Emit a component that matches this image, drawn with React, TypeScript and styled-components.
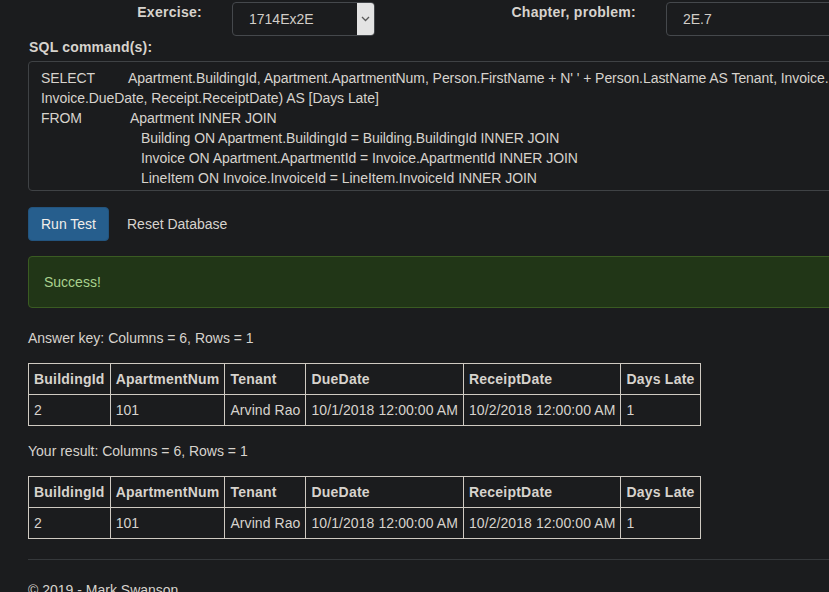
import React from "react";
import styled, { createGlobalStyle } from "styled-components";

const Global = createGlobalStyle`
  html, body {
    margin: 0;
    padding: 0;
    background: #1b1c1e;
    overflow: hidden;
  }
  body {
    font-family: "Liberation Sans", Arial, Helvetica, sans-serif;
    font-size: 14px;
    line-height: 20px;
    color: #d7d3cd;
  }
`;

const Page = styled.div`
  width: 1100px;
  padding: 2px 0 0 28px;
  box-sizing: border-box;
`;

const TopRow = styled.div`
  display: flex;
  align-items: flex-start;
`;

const FieldLabel = styled.label<{ $w: number }>`
  width: ${(p) => p.$w}px;
  text-align: right;
  font-weight: bold;
  letter-spacing: 0.28px;
  line-height: 20px;
  margin-right: 30px;
  flex: none;
`;

const SelectBox = styled.div`
  width: 143px;
  height: 34px;
  box-sizing: border-box;
  border: 1px solid #45484c;
  border-radius: 4px;
  display: flex;
  overflow: hidden;
  flex: none;
`;

const SelectValue = styled.div`
  flex: 1;
  padding: 6px 0 6px 16px;
  color: #d2cec8;
`;

const SelectArrow = styled.div`
  width: 17px;
  background: #e3e3e3;
  display: flex;
  align-items: center;
  justify-content: center;
`;

const TextInput = styled.div`
  width: 300px;
  height: 34px;
  box-sizing: border-box;
  border: 1px solid #45484c;
  border-radius: 4px;
  padding: 6px 16px;
  color: #d2cec8;
  flex: none;
`;

const SqlLabel = styled.div`
  font-weight: bold;
  letter-spacing: 0.2px;
  margin: 1px 0 4px 1px;
`;

const CodeArea = styled.div`
  height: 130px;
  box-sizing: border-box;
  border: 1px solid #3f4245;
  border-radius: 4px;
  padding: 6px 12px;
  white-space: pre;
  overflow: hidden;
  letter-spacing: -0.06px;
  color: #d7d3cd;
`;

const CodeLine = styled.div<{ $indent?: number }>`
  padding-left: ${(p) => p.$indent ?? 0}px;
  height: 20px;
`;

const Keyword = styled.span<{ $w: number }>`
  display: inline-block;
  width: ${(p) => p.$w}px;
`;

const ButtonRow = styled.div`
  display: flex;
  gap: 5px;
  margin-top: 16px;
`;

const Button = styled.button<{ $primary?: boolean }>`
  font-family: inherit;
  font-size: 14px;
  line-height: 20px;
  height: 34px;
  padding: 6px 12px;
  border-radius: 4px;
  border: 1px solid ${(p) => (p.$primary ? "#23547e" : "transparent")};
  background: ${(p) => (p.$primary ? "#265e8d" : "transparent")};
  color: ${(p) => (p.$primary ? "#f0eeea" : "#d7d3cd")};
  cursor: pointer;
`;

const Alert = styled.div`
  margin-top: 15px;
  margin-bottom: 20px;
  height: 52px;
  box-sizing: border-box;
  padding: 15px;
  background: #213617;
  border: 1px solid #3a5b22;
  border-radius: 4px;
  color: #a9d18e;
`;

const Caption = styled.p`
  margin: 0 0 15px;
`;

const Table = styled.table<{ $last?: boolean }>`
  border-collapse: collapse;
  margin-bottom: ${(p) => (p.$last ? 0 : 15)}px;
  & th,
  & td {
    border: 1px solid #cfcac2;
    padding: 5px;
    text-align: left;
    white-space: nowrap;
    line-height: 20px;
  }
  & th {
    font-weight: bold;
    letter-spacing: 0.22px;
  }
  & td {
    letter-spacing: 0.08px;
  }
`;

const Rule = styled.hr`
  border: 0;
  border-top: 1px solid #35383b;
  margin: 20px 0;
`;

const Footer = styled.p`
  margin: 0;
`;

const columns = ["BuildingId", "ApartmentNum", "Tenant", "DueDate", "ReceiptDate", "Days Late"];
const rows = [["2", "101", "Arvind Rao", "10/1/2018 12:00:00 AM", "10/2/2018 12:00:00 AM", "1"]];

const ResultTable = ({ last }: { last?: boolean }) => (
  <Table $last={last}>
    <thead>
      <tr>
        {columns.map((c) => (
          <th key={c}>{c}</th>
        ))}
      </tr>
    </thead>
    <tbody>
      {rows.map((r, i) => (
        <tr key={i}>
          {r.map((v, j) => (
            <td key={j}>{v}</td>
          ))}
        </tr>
      ))}
    </tbody>
  </Table>
);

export default function App() {
  return (
    <>
      <Global />
      <Page>
        <TopRow>
          <FieldLabel $w={174}>Exercise:</FieldLabel>
          <SelectBox>
            <SelectValue>1714Ex2E</SelectValue>
            <SelectArrow>
              <svg width="9" height="6" viewBox="0 0 9 6">
                <path d="M1 1 L4.5 4.5 L8 1" fill="none" stroke="#5a5a5a" strokeWidth="1.3" />
              </svg>
            </SelectArrow>
          </SelectBox>
          <FieldLabel $w={261}>Chapter, problem:</FieldLabel>
          <TextInput>2E.7</TextInput>
        </TopRow>
        <SqlLabel>SQL command(s):</SqlLabel>
        <CodeArea>
          <CodeLine>
            <Keyword $w={87}>SELECT</Keyword>
            Apartment.BuildingId, Apartment.ApartmentNum, Person.FirstName + N' ' + Person.LastName AS Tenant, Invoice.InvoiceId, DATEDIFF(day,
          </CodeLine>
          <CodeLine>Invoice.DueDate, Receipt.ReceiptDate) AS [Days Late]</CodeLine>
          <CodeLine>
            <Keyword $w={89}>FROM</Keyword>
            Apartment INNER JOIN
          </CodeLine>
          <CodeLine $indent={100}>Building ON Apartment.BuildingId = Building.BuildingId INNER JOIN</CodeLine>
          <CodeLine $indent={100}>Invoice ON Apartment.ApartmentId = Invoice.ApartmentId INNER JOIN</CodeLine>
          <CodeLine $indent={100}>LineItem ON Invoice.InvoiceId = LineItem.InvoiceId INNER JOIN</CodeLine>
          <CodeLine $indent={100}>Receipt ON LineItem.LineItemId = Receipt.LineItemId</CodeLine>
        </CodeArea>
        <ButtonRow>
          <Button $primary>Run Test</Button>
          <Button>Reset Database</Button>
        </ButtonRow>
        <Alert>Success!</Alert>
        <Caption>Answer key: Columns = 6, Rows = 1</Caption>
        <ResultTable />
        <Caption>Your result: Columns = 6, Rows = 1</Caption>
        <ResultTable last />
        <Rule />
        <Footer>© 2019 - Mark Swanson</Footer>
      </Page>
    </>
  );
}
